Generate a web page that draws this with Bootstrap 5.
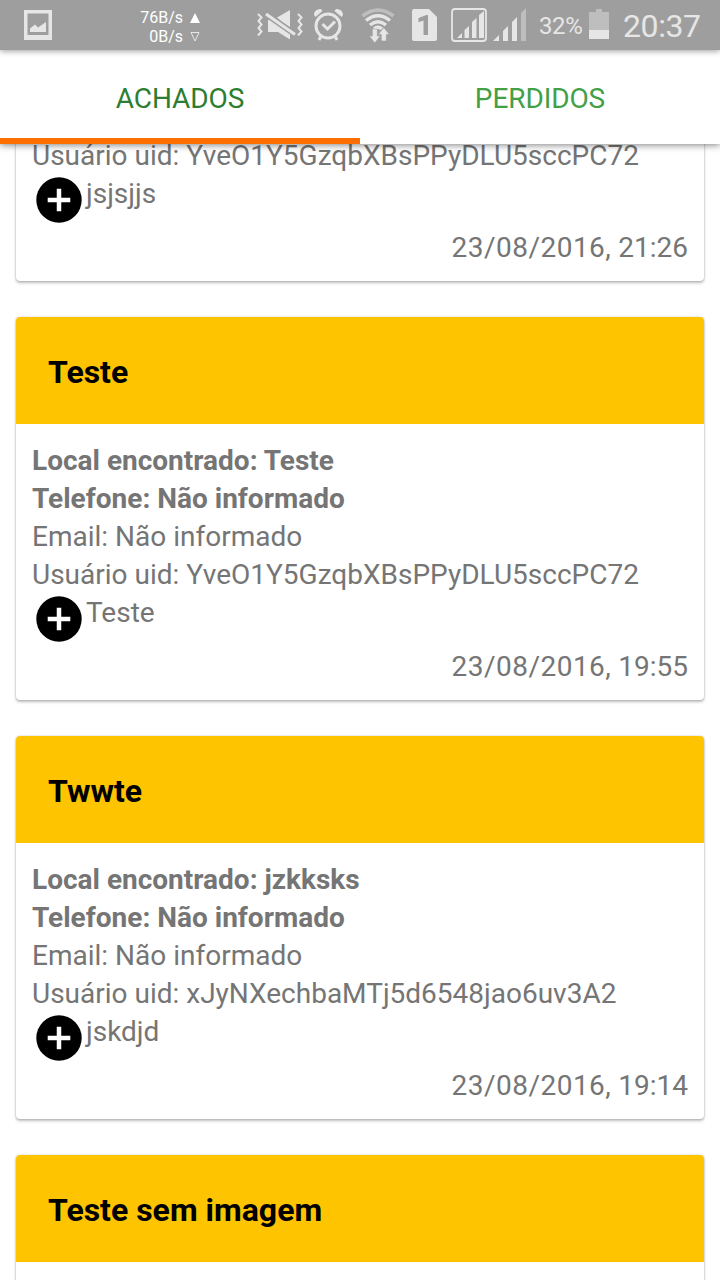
<!DOCTYPE html>
<html lang="pt-BR">
<head>
<meta charset="utf-8">
<meta name="viewport" content="width=device-width, initial-scale=1">
<title>Achados e Perdidos</title>
<link href="https://cdn.jsdelivr.net/npm/bootstrap@5.3.0/dist/css/bootstrap.min.css" rel="stylesheet">
<style>
  body { font-family: Roboto, "Noto Sans", sans-serif; font-size: 28px; line-height: 38px; color: #757575; background: #fff; }
  .screen { width: 720px; height: 1280px; }
  .status { height: 50px; background: #9e9e9e; color: #e6e6e6; line-height: 50px; }
  .status svg { display: block; flex: none; }
  .rate { width: 183px; margin-left: -52px; padding-top: 4px; font-size: 16px; line-height: 19px; color: #fff; }
  .battery-text { width: 43px; margin-left: 13px; padding-top: 2px; font-size: 24px; letter-spacing: -.4px; }
  .clock { margin-left: 14px; padding-top: 2px; font-size: 32px; letter-spacing: -.4px; }
  .tabs { height: 94px; z-index: 2; box-shadow: 0 1px 7px rgba(0,0,0,.5); background: #fff; }
  .tabs .nav-link { height: 94px; padding: 4px 0 0; border-radius: 0; border-bottom: 6px solid transparent; font-size: 28px; line-height: 90px; letter-spacing: -.1px; color: #43a047; }
  .tabs .nav-link.active { color: #2e7d32; border-bottom-color: #ff6f00; background: none; }
  .status { z-index: 3; box-shadow: 0 1px 6px rgba(0,0,0,.4); }
  .feed { gap: 36px; padding: 0 16px; }
  .entry { height: 383px; flex: none; border: 0; border-radius: 4px; color: inherit; box-shadow: 0 0 2px rgba(0,0,0,.22), 0 2px 3px rgba(0,0,0,.25); }
  .entry.scrolled { height: 144px; margin-top: -7px; border-radius: 0 0 4px 4px; }
  .entry .card-header { height: 107px; padding: 2px 32px 0; border: 0; border-radius: 4px 4px 0 0; background: #ffc400; color: #000; font-size: 32px; line-height: 106px; font-weight: 700; }
  .entry .card-body { padding: 18px 16px 0; }
  .entry.scrolled .card-body { padding-top: 0; }
  .detail { height: 54px; margin-top: -2px; }
  .detail span { padding-top: 2px; }
  .stamp { margin-top: 2px; }
  .stamp span { letter-spacing: .48px; }
</style>
</head>
<body>
<div class="screen d-flex flex-column overflow-hidden">
  <header class="status d-flex align-items-center flex-shrink-0 position-relative">
    <svg width="52" height="50" viewBox="0 0 52 50"><path fill="#e6e6e6" fill-rule="evenodd" d="M24 10h28v30H24zM27.500 13.500v21.500h21V13.500z"/><path fill="#e6e6e6" d="M30 32v-3.500l5-4 3 3 8-5.500v10z"/></svg>
    <div class="rate text-end">76B/s<br>0B/s</div>
    <svg width="74" height="50" viewBox="183 0 74 50"><path fill="#fff" d="M190 23l5-10 5 10z"/><path fill="none" stroke="#e8e8e8" d="M191 32.500h8l-4 8.500z"/></svg>
    <svg width="46" height="50" viewBox="257 0 46 50"><g fill="none" stroke="#e6e6e6" stroke-width="2"><path d="M258 14l3.500 3.500-3 3.500 3 3.500-3 3.500 3 3.500-3.500 4M298 14l3.500 3.500-3 3.500 3 3.500-3 3.500 3 3.500-3.500 4"/></g><path fill="#e6e6e6" d="M277 17.500L290 10v20zM268 20h6l16 12v7.500L278 32h-10z"/><path stroke="#9e9e9e" stroke-width="6" d="M266 14l30 21"/><path stroke="#e6e6e6" stroke-width="3" d="M266 14l29 20.500"/></svg>
    <svg width="30" height="50" viewBox="313 0 30 50" style="margin-left:10px"><g fill="none" stroke="#e6e6e6"><circle cx="328" cy="26" r="12" stroke-width="3"/><path stroke-width="3" d="M322.500 24l5 5 7.500-7.500"/><path stroke-width="3" d="M321 36l-2 4M335 36l2 4"/></g><path fill="#e6e6e6" d="M314 15c0-4 3-6 7-6l1.500 2-7 6zM343 15c0-4-3-6-7-6l-1.500 2 7 6z"/></svg>
    <svg width="34" height="50" viewBox="361 0 34 50" style="margin-left:18px"><g fill="none" stroke-width="3.500"><path stroke="#bebebe" d="M362.500 16Q378 4 393.500 16"/><g stroke="#e6e6e6"><path d="M366 20.500Q378 11 390 20.500"/><path d="M370 25Q378 18.500 386 25"/><path d="M374 29Q378 25.500 382 29"/></g></g><path fill="#e6e6e6" stroke="#9e9e9e" stroke-width=".6" d="M372.300 29h5v7h3L374.800 43l-5.500-7h3zM381.300 41h5v-6.500h3L383.800 27.500l-5.500 7h3z"/></svg>
    <svg width="25" height="50" viewBox="412 0 25 50" style="margin-left:17px"><path fill="#e6e6e6" d="M414 9h15l8 8v22q0 2-2 2h-21q-2 0-2-2V11q0-2 2-2z"/><path fill="#9e9e9e" d="M428 15v20h-4.500V20.500l-5 1.800V18l8-3z"/></svg>
    <svg width="75" height="50" viewBox="451 0 75 50" style="margin-left:14px"><rect x="452" y="9" width="34" height="32" rx="3" fill="none" stroke="#e6e6e6" stroke-width="1.800"/><path fill="#e6e6e6" d="M457 38l5-5v5zM464.500 38V30l4.500-4v12zM472 38V22l4.500-4v20zM479 38V15l5-4v27zM493 41l6-6v6zM503 41V31l5-5v15zM512 41V22l5-5v24z"/><path fill="#bebebe" d="M521 41V13l5-5v33z"/></svg>
    <div class="battery-text">32%</div>
    <svg width="20" height="50" viewBox="589 0 20 50" style="margin-left:7px"><path fill="#bebebe" d="M589 12h7V9h6v3h7v18h-20z"/><path fill="#e6e6e6" d="M589 30h20v9h-20z"/></svg>
    <div class="clock">20:37</div>
  </header>

  <nav class="tabs nav nav-fill flex-shrink-0 position-relative">
    <a class="nav-link active w-50" href="#">ACHADOS</a>
    <a class="nav-link w-50" href="#">PERDIDOS</a>
  </nav>

  <main class="feed d-flex flex-column">
    <article class="card entry scrolled">
      <div class="card-body">
        <div>Usuário uid: YveO1Y5GzqbXBsPPyDLU5sccPC72</div>
        <div class="detail d-flex"><svg width="54" height="54" viewBox="0 0 54 54"><circle cx="27" cy="27" r="22.700"/><path stroke="#fff" stroke-width="4.500" d="M15.700 27h22.600M27 15.700v22.600"/></svg><span>jsjsjjs</span></div>
        <div class="stamp text-end"><span>23/08/2016,</span> 21:26</div>
      </div>
    </article>

    <article class="card entry">
      <div class="card-header">Teste</div>
      <div class="card-body">
        <div class="fw-bold">Local encontrado: Teste</div>
        <div class="fw-bold">Telefone: Não informado</div>
        <div>Email: Não informado</div>
        <div>Usuário uid: YveO1Y5GzqbXBsPPyDLU5sccPC72</div>
        <div class="detail d-flex"><svg width="54" height="54" viewBox="0 0 54 54"><circle cx="27" cy="27" r="22.700"/><path stroke="#fff" stroke-width="4.500" d="M15.700 27h22.600M27 15.700v22.600"/></svg><span>Teste</span></div>
        <div class="stamp text-end"><span>23/08/2016,</span> 19:55</div>
      </div>
    </article>

    <article class="card entry">
      <div class="card-header">Twwte</div>
      <div class="card-body">
        <div class="fw-bold">Local encontrado: jzkksks</div>
        <div class="fw-bold">Telefone: Não informado</div>
        <div>Email: Não informado</div>
        <div>Usuário uid: xJyNXechbaMTj5d6548jao6uv3A2</div>
        <div class="detail d-flex"><svg width="54" height="54" viewBox="0 0 54 54"><circle cx="27" cy="27" r="22.700"/><path stroke="#fff" stroke-width="4.500" d="M15.700 27h22.600M27 15.700v22.600"/></svg><span>jskdjd</span></div>
        <div class="stamp text-end"><span>23/08/2016,</span> 19:14</div>
      </div>
    </article>

    <article class="card entry">
      <div class="card-header">Teste sem imagem</div>
      <div class="card-body"></div>
    </article>
  </main>
</div>
<script src="https://cdn.jsdelivr.net/npm/bootstrap@5.3.0/dist/js/bootstrap.bundle.min.js"></script>
</body>
</html>
